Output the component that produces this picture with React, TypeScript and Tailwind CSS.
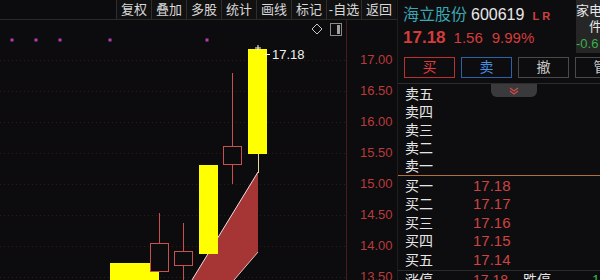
const tools = ['复权', '叠加', '多股', '统计', '画线', '标记', '-自选', '返回']
const axis = ['17.00', '16.50', '16.00', '15.50', '15.00', '14.50', '14.00', '13.50']
const gridY = [60, 91, 122, 153, 184, 215, 246, 277]
const sells = ['卖五', '卖四', '卖三', '卖二', '卖一']
const buys = [
  { label: '买一', price: '17.18', vol: '3' },
  { label: '买二', price: '17.17', vol: '' },
  { label: '买三', price: '17.16', vol: '' },
  { label: '买四', price: '17.15', vol: '' },
  { label: '买五', price: '17.14', vol: '' },
]

const font = { fontFamily: '"Liberation Sans", "Noto Sans CJK SC", sans-serif' }

function Chart() {
  return (
    <svg width="347" height="260" viewBox="0 20 347 260" className="block shrink-0">
      {gridY.map((y) => (
        <line key={y} x1="0" x2="346" y1={y + 0.5} y2={y + 0.5} stroke="#3a1616" strokeDasharray="1 3" />
      ))}
      {[12, 36, 60, 110, 207].map((x) => (
        <rect key={x} x={x - 1.5} y="38.5" width="3" height="3" fill="#b040b0" />
      ))}
      {/* diamond + box icons */}
      <path d="M317 24 L322 29 L317 34 L312 29 Z" fill="none" stroke="#c8c8c8" strokeWidth="1" />
      <rect x="330.5" y="23.5" width="11" height="12" fill="none" stroke="#8a8a8a" />
      <rect x="337" y="25" width="3" height="9" fill="#a0a0a0" />
      <line x1="346.5" x2="346.5" y1="20" y2="280" stroke="#4a1a1a" />

      {/* band */}
      <polygon points="258,172 258,252 234,280 192,280" fill="#a63535" />
      <line x1="258" y1="172" x2="192" y2="280" stroke="#f0e0e0" strokeWidth="1" />
      <line x1="258" y1="252" x2="234" y2="280" stroke="#e0c0c0" strokeWidth="1" />
      <line x1="258.5" y1="154" x2="258.5" y2="173" stroke="#e8d8a0" />

      {/* candles */}
      <rect x="110" y="263" width="49" height="20" fill="#ffff00" />
      <line x1="159.5" x2="159.5" y1="213" y2="243" stroke="#c85050" />
      <rect x="150.5" y="243.5" width="18" height="28" fill="#0c0b0d" stroke="#c85050" />
      <line x1="183.5" x2="183.5" y1="223" y2="280" stroke="#c85050" />
      <rect x="174.5" y="251.5" width="18" height="14" fill="#0c0b0d" stroke="#c85050" />
      <rect x="199" y="165" width="19" height="89" fill="#ffff00" />
      <line x1="232.5" x2="232.5" y1="73" y2="184" stroke="#c85050" />
      <rect x="223.5" y="146.5" width="18" height="18" fill="#0c0b0d" stroke="#c85050" />
      <rect x="248" y="49" width="19" height="105" fill="#ffff00" />

      <path d="M255 48 L261 48 M258 45 L258 50" stroke="#ffffff" strokeWidth="1" />
      <line x1="265" x2="270" y1="54.5" y2="54.5" stroke="#ffffff" />
      <text x="272" y="59" fill="#f0f0f0" fontSize="13" style={font}>
        17.18
      </text>
    </svg>
  )
}

export default function App() {
  return (
    <div className="w-[600px] h-[280px] flex bg-[#0c0b0d] overflow-hidden" style={font}>
      <div className="w-[397px] shrink-0 flex flex-col">
        <div className="h-[20px] shrink-0 flex border-b border-[#2a2a2a]">
          <div className="w-[116px] shrink-0" />
          {tools.map((t) => (
            <div
              key={t}
              className="w-[35px] shrink-0 border-l border-[#2e2e2e] bg-[#121112] flex items-center justify-center text-[13px] text-[#d8d8d8] leading-none"
            >
              {t}
            </div>
          ))}
        </div>
        <div className="flex h-[260px] shrink-0 overflow-hidden">
          <Chart />
          <div className="flex-1 flex flex-col pt-[24px] pl-[13px]">
            {axis.map((a) => (
              <div key={a} className="h-[31px] leading-[31px] text-[13px] text-[#b83c3c] shrink-0">
                {a}
              </div>
            ))}
          </div>
        </div>
      </div>

      <div className="flex-1 relative flex flex-col border-l border-[#1e1e1e] bg-[#0d0d0f]">
        <div className="flex h-[53px] shrink-0">
          <div className="w-[178px] shrink-0 pl-[5px] pt-[3px] flex flex-col">
            <div className="flex items-baseline h-[22px]">
              <span className="text-[16px] text-[#3aa7b2]">海立股份</span>
              <span className="text-[16px] text-[#e8e8e8] ml-[4px]">600619</span>
              <span className="text-[11px] text-[#d04040] ml-[8px] tracking-[3px] font-bold">LR</span>
            </div>
            <div className="flex items-baseline h-[24px] text-[#d63c3c]">
              <span className="text-[17px] font-bold">17.18</span>
              <span className="text-[15px] ml-[8px]">1.56</span>
              <span className="text-[15px] ml-[9px]">9.99%</span>
            </div>
          </div>
          <div className="flex-1 bg-[#262627] overflow-hidden flex flex-col text-[13px] leading-[16px] whitespace-nowrap pt-[3px]">
            <span className="text-[#e8e8e8]">家电</span>
            <span className="text-[#e8e8e8] pl-[13px]">件</span>
            <span className="text-[#3ab04a] pt-[1px]">-0.6</span>
          </div>
        </div>
        <div className="flex shrink-0 gap-[6px] pl-[6px] h-[21px] mt-[4px] text-[14px]">
          <div className="w-[51px] shrink-0 border border-[#b83030] text-[#e03c3c] flex items-center justify-center">买</div>
          <div className="w-[51px] shrink-0 border border-[#2c62a8] text-[#4a8ee0] flex items-center justify-center">卖</div>
          <div className="w-[51px] shrink-0 border border-[#4a4a4a] text-[#c8c8c8] flex items-center justify-center">撤</div>
          <div className="w-[51px] shrink-0 border border-[#4a4a4a] text-[#c8c8c8] flex items-center justify-center">管</div>
        </div>
        <div className="mt-[5px] shrink-0 border-t border-[#2c2c2c]" />
        <div className="absolute left-[93px] top-[84px] w-[46px] h-[13px] bg-[#3a3a3c] rounded-b-[6px] flex items-center justify-center">
          <svg width="10" height="8" viewBox="0 0 10 8">
            <path d="M1 1 L5 4 L9 1 M1 4 L5 7 L9 4" fill="none" stroke="#d04848" strokeWidth="1.2" />
          </svg>
        </div>
        <div className="flex shrink-0 flex-col pl-[7px] pt-[1px]">
          {sells.map((s) => (
            <div key={s} className="h-[18px] leading-[18px] text-[14px] text-[#e6e6e6]">
              {s}
            </div>
          ))}
        </div>
        <div className="shrink-0 border-t border-[#b0703a]" />
        <div className="flex shrink-0 flex-col pl-[7px] pt-[1px]">
          {buys.map((b) => (
            <div key={b.label} className="h-[18.4px] leading-[18px] flex text-[14px]">
              <span className="w-[68px] text-[#e6e6e6]">{b.label}</span>
              <span className="w-[100px] text-[#cc4444] text-[15px]">{b.price}</span>
              <span className="flex-1 text-right text-[#b8b070]">{b.vol}</span>
            </div>
          ))}
        </div>
        <div className="shrink-0 border-t border-[#2a2a2a] mt-[1px]" />
        <div className="flex shrink-0 pl-[7px] text-[14px] leading-[18px]">
          <span className="w-[68px] text-[#e6e6e6]">涨停</span>
          <span className="w-[50px] text-[#cc4444]">17.18</span>
          <span className="w-[69px] text-[#e6e6e6]">跌停</span>
          <span className="text-[#3ab04a]">14</span>
        </div>
      </div>
    </div>
  )
}
